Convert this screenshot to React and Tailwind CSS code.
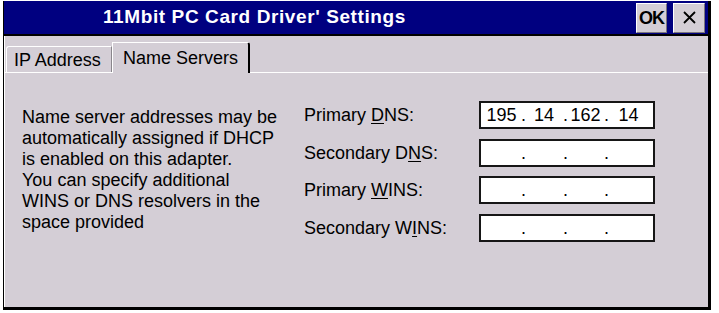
import React from 'react';

const fields = [
  { pre: 'Primary ', key: 'D', post: 'NS:', value: ['195', '14', '162', '14'] },
  { pre: 'Secondary D', key: 'N', post: 'S:', value: ['', '', '', ''] },
  { pre: 'Primary ', key: 'W', post: 'INS:', value: ['', '', '', ''] },
  { pre: 'Secondary W', key: 'I', post: 'NS:', value: ['', '', '', ''] },
];

const descLines = [
  'Name server addresses may be',
  'automatically assigned if DHCP',
  'is enabled on this adapter.',
  'You can specify additional',
  'WINS or DNS resolvers in the',
  'space provided',
];

const IpBox = ({ parts }) => (
  <div className="w-[176px] h-[28px] bg-white border-2 border-[#161616] flex items-center pl-px text-[18px] leading-none">
    <span className="w-[39px] text-center">{parts[0]}</span>
    <span className="w-[4px] text-center">.</span>
    <span className="w-[38px] text-center">{parts[1]}</span>
    <span className="w-[4px] text-center">.</span>
    <span className="w-[37px] text-center">{parts[2]}</span>
    <span className="w-[4px] text-center">.</span>
    <span className="w-[41px] text-center">{parts[3]}</span>
  </div>
);

const App = () => {
  return (
    <div className="w-[719px] h-[313px] bg-white pt-px pl-[3px] font-['Liberation_Sans',Arial,sans-serif] text-black">
      <div className="w-[708px] h-[309px] flex flex-col border-l border-r-[3px] border-b-[3px] border-black bg-[#d4ced6]">
        {/* title bar */}
        <div className="h-[35px] flex-shrink-0 bg-[#000080] border-b-2 border-black flex items-center pl-[99px] pr-[3px]">
          <span className="text-white font-bold text-[19px] tracking-[0.6px]">11Mbit PC Card Driver' Settings</span>
          <div className="ml-auto flex gap-[6px] items-center">
            <button className="w-[31px] h-[30px] bg-[#d4ced6] border border-t-white border-l-white border-r-[#7a767c] border-b-[#7a767c] font-bold text-[18px] tracking-[-1px] leading-none flex items-center justify-center">
              OK
            </button>
            <button className="w-[32px] h-[30px] bg-[#d4ced6] border border-t-white border-l-white border-r-[#7a767c] border-b-[#7a767c] flex items-center justify-center">
              <svg width="13" height="13" viewBox="0 0 13 13">
                <path d="M1 1 L12 12 M12 1 L1 12" stroke="#000" strokeWidth="1.8" />
              </svg>
            </button>
          </div>
        </div>

        <div className="flex-1 flex flex-col border-l border-white">
          {/* tabs */}
          <div className="h-[37px] flex items-end border-b border-white pl-px flex-shrink-0">
            <div className="h-[26px] w-[106px] border-l border-t border-white border-r border-r-[#8a868c] rounded-tl-[3px] pl-[7px] flex items-center text-[18px] leading-none">
              IP Address
            </div>
            <div className="h-[31px] w-[138px] -mb-px bg-[#d4ced6] border-l border-t border-white border-r-2 border-r-black rounded-tr-[3px] pl-[10px] flex items-center text-[18px] leading-none relative z-10">
              Name Servers
            </div>
          </div>

          {/* body */}
          <div className="flex pl-[17px]">
            <p className="w-[282px] mt-[34px] text-[18px] leading-[21px]">
              {descLines.map((l, i) => (
                <span key={i} className="block whitespace-nowrap">{l}</span>
              ))}
            </p>
            <div className="mt-[28px] flex flex-col gap-[9.5px]">
              {fields.map((f, i) => (
                <div key={i} className="flex items-center h-[28px]">
                  <span className="w-[175px] text-[18px] leading-none">
                    {f.pre}
                    <u className="underline-offset-2">{f.key}</u>
                    {f.post}
                  </span>
                  <IpBox parts={f.value} />
                </div>
              ))}
            </div>
          </div>
        </div>
      </div>
    </div>
  );
};

export default App;
